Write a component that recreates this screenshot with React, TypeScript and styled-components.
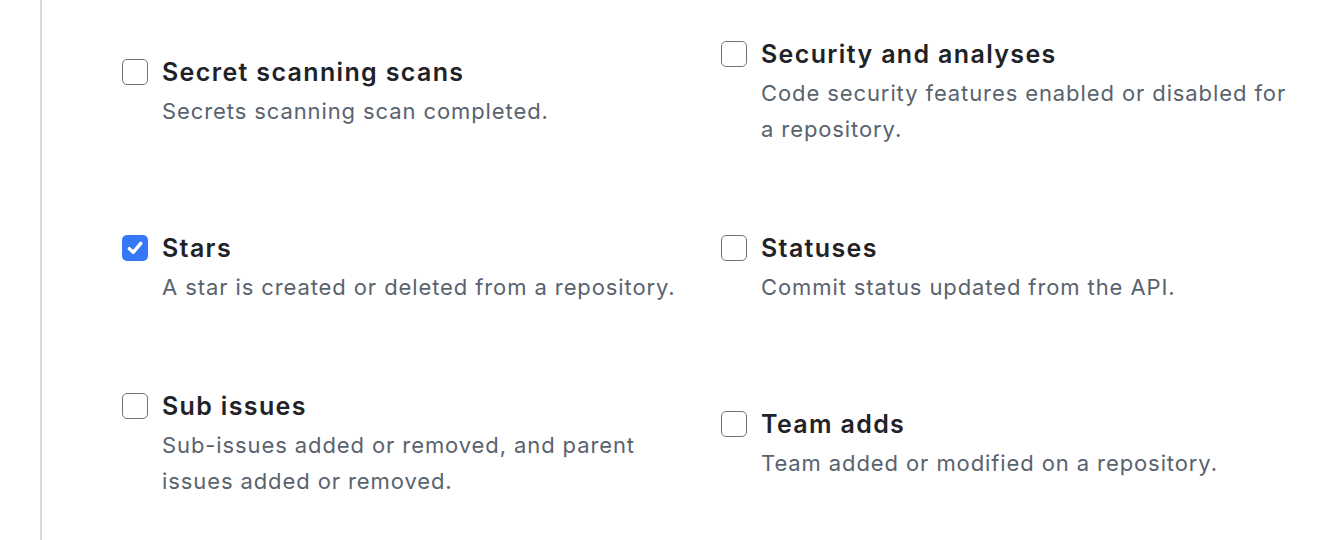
import React from "react";
import styled, { createGlobalStyle } from "styled-components";

const Global = createGlobalStyle`
  html, body { margin: 0; padding: 0; background: #ffffff; }
  body { font-family: Inter, "Noto Sans", "Liberation Sans", sans-serif; -webkit-font-smoothing: antialiased; }
`;

const Page = styled.div`
  min-height: 540px;
  padding-left: 40px;
  box-sizing: border-box;
  display: flex;
`;

const Section = styled.div`
  flex: 1;
  border-left: 2px solid #d1d9e0;
  padding: 36px 0 0 80px;
  min-height: 540px;
  box-sizing: border-box;
`;

const Grid = styled.div`
  display: grid;
  grid-template-columns: 575px 575px;
  column-gap: 24px;
  row-gap: 83px;
  align-items: center;
`;

const Item = styled.label`
  display: flex;
  align-items: flex-start;
  gap: 14px;
  cursor: pointer;
`;

const Box = styled.span<{ $checked?: boolean }>`
  flex: none;
  width: 26px;
  height: 26px;
  margin-top: 5px;
  box-sizing: border-box;
  border-radius: 5px;
  border: ${(p) => (p.$checked ? "none" : "1.5px solid #737373")};
  background: ${(p) => (p.$checked ? "#3478f6" : "#ffffff")};
  display: flex;
  align-items: center;
  justify-content: center;
`;

const Text = styled.div`
  display: flex;
  flex-direction: column;
  gap: 3px;
`;

const Title = styled.span`
  font-size: 25px;
  line-height: 36px;
  font-weight: 600;
  letter-spacing: 1.35px;
  color: #1f2328;
`;

const Desc = styled.span`
  font-size: 22px;
  line-height: 36px;
  font-weight: 400;
  letter-spacing: 0.9px;
  color: #59636e;
`;

const Check = () => (
  <svg width="18" height="18" viewBox="0 0 18 18" fill="none">
    <path d="M3.3 9.6 L7.2 13.4 L14.8 4.4" stroke="#ffffff" strokeWidth="3.4" strokeLinecap="round" strokeLinejoin="round" />
  </svg>
);

const events = [
  { title: "Secret scanning scans", desc: "Secrets scanning scan completed." },
  { title: "Security and analyses", desc: "Code security features enabled or disabled for a repository." },
  { title: "Stars", desc: "A star is created or deleted from a repository.", checked: true },
  { title: "Statuses", desc: "Commit status updated from the API." },
  { title: "Sub issues", desc: "Sub-issues added or removed, and parent issues added or removed." },
  { title: "Team adds", desc: "Team added or modified on a repository." },
];

export default function App() {
  return (
    <>
      <Global />
      <Page>
        <Section>
          <Grid>
            {events.map((e) => (
              <Item key={e.title}>
                <Box $checked={e.checked}>{e.checked && <Check />}</Box>
                <Text>
                  <Title>{e.title}</Title>
                  <Desc>{e.desc}</Desc>
                </Text>
              </Item>
            ))}
          </Grid>
        </Section>
      </Page>
    </>
  );
}
